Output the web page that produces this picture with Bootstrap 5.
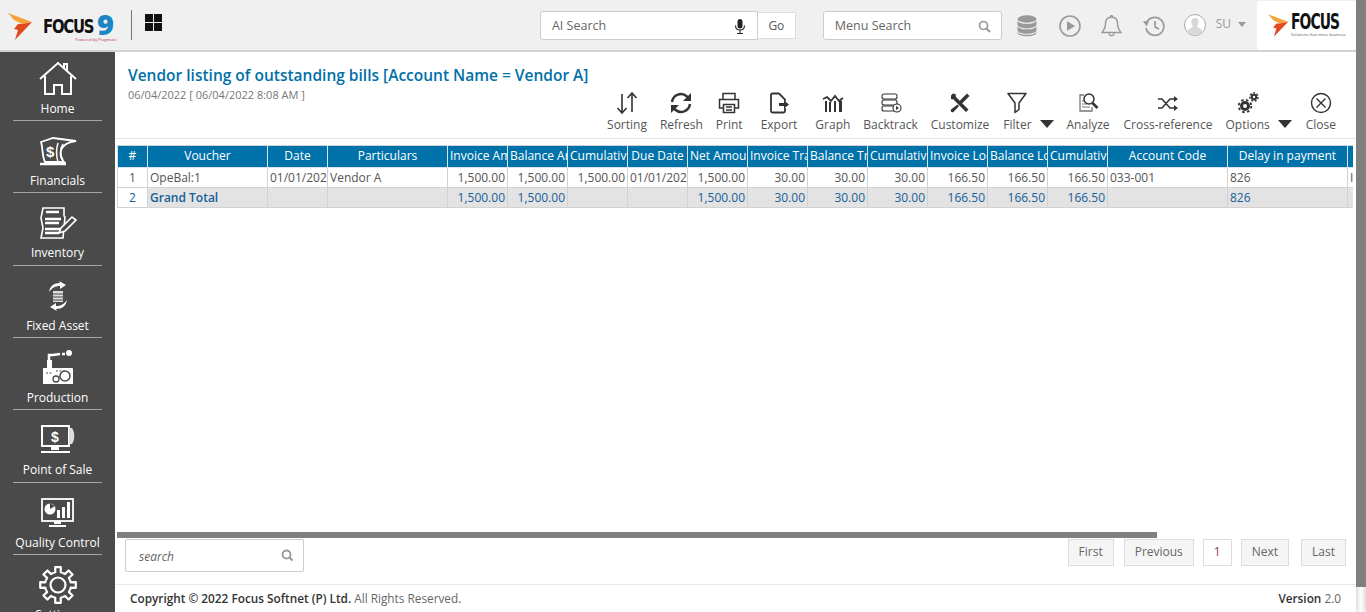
<!DOCTYPE html>
<html lang="en">
<head>
<meta charset="UTF-8">
<title>Vendor listing of outstanding bills</title>
<link href="https://cdn.jsdelivr.net/npm/bootstrap@5.3.0/dist/css/bootstrap.min.css" rel="stylesheet">
<style>
html, body { height: 612px; overflow: hidden; }
body { font-family: "Open Sans", "Liberation Sans", sans-serif; font-size: 12px; color: #555; background: #fff; }
svg { display: block; }

.app-shell { width: 1356px; height: 612px; }
.fake-scroll { width: 10px; height: 612px; background: #f1f1f1; }
.fake-thumb { height: 587px; background: #7f7f7f; }
.fake-rest { height: 25px; background: linear-gradient(90deg, #ddd, #fff 50%, #ddd); border-radius: 0 0 5px 5px; }

/* top bar */
.topbar { height: 52px; flex: none; background: #f0f0f0; border-bottom: 2px solid #d2d2d2; padding-top: 2px; }
.brand-flame { margin-left: 8px; margin-top: 1px; }
.brand-name { font-family: "DejaVu Sans", sans-serif; font-weight: 700; font-size: 20px; color: #111; margin-left: 10px; width: 54px; letter-spacing: -1.6px; line-height: 1; transform: scaleX(.74); transform-origin: left; }
.brand-nine { position: relative; width: 18px; height: 30px; font-weight: 800; font-size: 29px; color: #1a86c4; line-height: 26px; }
.brand-tag { position: absolute; right: -2px; top: 26px; font-size: 4px; line-height: 5px; font-weight: 400; color: #c2334d; white-space: nowrap; }
.brand-rule { width: 1px; height: 30px; background: #777; margin: -2px 13px 0 16px; }
.grid-mark { margin-top: -7px; }
.ai-box { width: 218px; height: 29px; margin-left: 378px; margin-top: -1px; background: #fff; border: 1px solid #ccc; border-radius: 3px 0 0 3px; padding: 1px 11px 0; font-size: 12.5px; color: #666; }
.go-btn { width: 38px; height: 27px; margin-top: -1px; padding-top: 1px; background: #fff; border: 1px solid #ddd; border-left: 0; font-size: 12px; color: #555; }
.menu-box { width: 179px; height: 29px; margin-left: 27px; margin-top: -1px; background: #fff; border: 1px solid #ccc; border-radius: 3px; padding: 1px 10px 0 11px; font-size: 12.5px; color: #666; }
.top-db { margin-left: 15px; }
.top-play { margin-left: 22px; }
.top-bell { margin-left: 20px; }
.top-hist { margin-left: 21px; }
.top-user { margin-left: 19px; margin-top: -2px; }
.top-su { font-size: 12px; color: #999; margin-left: 10px; margin-top: -4px; }
.top-caret { width: 0; height: 0; border-left: 4px solid transparent; border-right: 4px solid transparent; border-top: 5px solid #999; margin: -3px 0 0 7px; }
.logo-box { width: 99px; height: 49px; margin-left: 11px; margin-top: -2px; background: #fff; border-radius: 3px; padding-left: 11px; }
.logo-text { width: 60px; margin-left: 2px; }
.logo-word { font-family: "DejaVu Sans", sans-serif; font-weight: 700; font-size: 21px; line-height: 19px; color: #111; letter-spacing: -1.4px; transform: scaleX(.66); transform-origin: left; white-space: nowrap; }
.logo-tag { font-size: 4px; line-height: 5px; color: #555; white-space: nowrap; }

/* side menu */
.side-menu { width: 115px; flex: none; background: #4a4a4a; overflow: hidden; }
.side-item { height: 72.33px; flex: none; color: #fff; position: relative; padding-top: 11px; }
.side-item:first-child { height: 69px; padding-top: 8px; }
.side-item::after { content: ""; position: absolute; left: 13px; right: 13px; bottom: 0; height: 1px; background: #a5a5a5; }
.side-item:last-child::after { display: none; }
.side-icon { height: 38px; }
.side-label { font-size: 12px; line-height: 16px; margin-top: 3px; white-space: nowrap; }

/* report head */
.report-pane { width: 1241px; min-width: 0; }
.report-head { height: 87px; flex: none; border-bottom: 1px solid #e4e4e4; padding: 12px 0 0 13px; }
.report-title { font-size: 15.5px; line-height: 22px; font-weight: 600; color: #0070a8; margin: 0; }
.report-date { font-size: 11px; line-height: 15px; margin-top: 1px; color: #777; }
.tool-row { gap: 13px; padding-right: 20px; margin-top: -10px; }
.tool-item { text-align: center; color: #555; line-height: 16px; white-space: nowrap; }
.tool-item svg { margin: 0 auto 3px; }
.mr-1px { margin-right: 1px; }
.mr-5px { margin-right: 5px; }
.tool-caret { width: 0; height: 0; border-left: 7px solid transparent; border-right: 7px solid transparent; border-top: 8px solid #333; margin: 28px 0 0 -5px; }
.tool-caret-b { margin-left: -5px; margin-right: 1px; }

/* grid */
.grid-clip { margin: 6px 3px 0 2px; overflow: hidden; flex: 1 1 auto; min-height: 0; }
.data-grid { table-layout: fixed; width: 1290px; margin: 0; border-collapse: collapse; font-size: 12px; color: #555; }
.col-idx { width: 30px; }
.col-std { width: 60px; }
.col-big { width: 120px; }
.data-grid th, .data-grid td { padding: 0 2px; overflow: hidden; white-space: nowrap; border: 1px solid #d2d2d2; background: #fff; color: #555; vertical-align: middle; }
.data-grid th { height: 22px; background: #0072aa; color: #fff; font-weight: 400; text-align: center; border-color: #d8e4ea; border-top-color: #d2d2d2; padding-bottom: 1px; }
.data-grid td { height: 20px; line-height: 18px; padding-top: 1px; }
.data-grid td.num { text-align: right; }
.data-grid td.idx { text-align: center; }
.data-grid tr.grand-row td { background: #e3e3e3; color: #14609a; }
.data-grid tr.grand-row td.grand-name { font-weight: 600; }
.data-grid tr.grand-row td.idx { background: #fff; }
.h-scroll { height: 6px; width: 1040px; margin-left: 2px; flex: none; background: #808080; }

/* bottom of report */
.pager-row { height: 46px; flex: none; padding: 1px 10px 0 10px; }
.grid-search { width: 179px; height: 33px; background: #fff; border: 1px solid #ccc; border-radius: 2px; padding: 0 9px 0 13px; font-size: 12px; font-style: italic; color: #666; }
.grid-search span { margin-top: 2px; }
.pager-btn { height: 27px; background: #f5f5f5; border: 1px solid #ddd; padding: 0 10px; color: #666; line-height: 24px; }
.pager-now { background: #fff; color: #8a4a3a; margin: 0 -1px; }
.pager-last { margin-left: 2px; }
.pager-set { gap: 10px; }
.foot-bar { height: 28px; flex: none; border-top: 1px solid #e8e8e8; padding: 0 15px; color: #666; font-size: 11.8px; }
.foot-bar b { font-weight: 600; color: #333; }
</style>
</head>
<body>
<div class="d-flex">
<div class="app-shell d-flex flex-column">

  <header class="topbar d-flex align-items-center">
    <svg class="brand-flame" width="25" height="27" viewBox="0 0 25 27"><path d="M0 0 24 9 14 11 6 7z" fill="#f5a33a"/><path d="M24 9 7 27l3-10-4-1 4-5h4z" fill="#e2491f"/></svg>
    <div class="brand-name">FOCUS</div>
    <div class="brand-nine">9<span class="brand-tag">Powered by Pragmatic</span></div>
    <div class="brand-rule"></div>
    <svg class="grid-mark" width="17" height="17" viewBox="0 0 17 17"><path d="M0 0h8v8H0zM9 0h8v8H9zM0 9h8v8H0zM9 9h8v8H9z" fill="#111"/></svg>

    <div class="ai-box d-flex align-items-center justify-content-between">
      <span>AI Search</span>
      <svg width="12" height="15" viewBox="0 0 12 15"><rect x="3.5" y="0" width="5" height="9.5" rx="2.5" fill="#222"/><path d="M1.5 6.5c0 6 9 6 9 0M6 11.5V14M3 14.5h6" fill="none" stroke="#222" stroke-width="1.1"/></svg>
    </div>
    <div class="go-btn d-flex align-items-center justify-content-center">Go</div>
    <div class="menu-box d-flex align-items-center justify-content-between">
      <span>Menu Search</span>
      <svg width="13" height="13" viewBox="0 0 13 13"><circle cx="5.5" cy="5.5" r="4" fill="none" stroke="#999" stroke-width="1.7"/><path d="m8.5 8.5 3.5 3.5" stroke="#999" stroke-width="2"/></svg>
    </div>

    <svg class="top-db" width="20" height="22" viewBox="0 0 20 22"><ellipse cx="10" cy="4" rx="9.5" ry="3.7" fill="#999"/><path d="M.5 5.5v4c0 5 19 5 19 0v-4c-1 4.500-18 4.500-19 0zM.5 11v4c0 5 19 5 19 0v-4c-1 4.500-18 4.500-19 0zM.5 16.500v1c0 5 19 5 19 0v-1c-1 4.500-18 4.500-19 0z" fill="#999"/></svg>
    <svg class="top-play" width="22" height="22" viewBox="0 0 22 22"><circle cx="11" cy="11" r="10" fill="none" stroke="#999" stroke-width="1.6"/><path d="M8 6v10l8-5z" fill="#999"/></svg>
    <svg class="top-bell" width="21" height="22" viewBox="0 0 21 22"><path d="M10.500 2c-4 0-6 3-6 7 0 5-2 6-3.500 8.500h19C18.500 15 16.500 14 16.500 9c0-4-2-7-6-7zM8 18.500c.5 3 4.500 3 5 0M9.500 2c0-2 2-2 2 0" fill="none" stroke="#999" stroke-width="1.4"/></svg>
    <svg class="top-hist" width="22" height="22" viewBox="0 0 22 22"><path d="M3.500 8A9 9 0 1 1 3 13" fill="none" stroke="#999" stroke-width="1.7"/><path d="m0 6 6 .5-2.500 5z" fill="#999"/><path d="M12 6v6l4 2" fill="none" stroke="#999" stroke-width="1.7"/></svg>
    <svg class="top-user" width="22" height="22" viewBox="0 0 22 22"><circle cx="11" cy="11" r="10.500" fill="#fff" stroke="#aaa"/><path d="M11 4c-3 0-4 2.500-3.500 5 .3 2 1 3 1.500 4-2 1-5 2-6 4.500 4 4 12 4 16 0-1-2.500-4-3.500-6-4.500.5-1 1.200-2 1.500-4C15 6.500 14 4 11 4z" fill="#d8d8d8"/></svg>
    <span class="top-su">SU</span>
    <span class="top-caret"></span>

    <div class="logo-box d-flex align-items-center">
      <svg class="flex-shrink-0" width="21" height="25" viewBox="0 0 25 27"><path d="M0 0 24 9 14 11 6 7z" fill="#f5a33a"/><path d="M24 9 7 27l3-10-4-1 4-5h4z" fill="#e2491f"/></svg>
      <div class="logo-text">
        <div class="logo-word">FOCUS</div>
        <div class="logo-tag">Solutions that move business</div>
      </div>
    </div>
  </header>

  <div class="d-flex flex-grow-1 overflow-hidden">
    <aside class="side-menu d-flex flex-column">
      <div class="side-item text-center">
        <div class="side-icon d-flex justify-content-center align-items-center"><svg width="38" height="36" viewBox="0 0 38 36"><path d="M1 18 19 2l18 16M25 7V3h3v7M6 15v18h9V24h8v9h9V15" fill="none" stroke="#fff" stroke-width="2"/></svg></div>
        <div class="side-label">Home</div>
      </div>
      <div class="side-item text-center">
        <div class="side-icon d-flex justify-content-center align-items-center"><svg width="38" height="30" viewBox="0 0 38 30"><path d="M2 6 14 2l23 3c-8 1-13 4-15 9-1 4 0 9 3 12H6C3 20 4 12 2 6z" fill="none" stroke="#fff" stroke-width="1.800"/><path d="M19 7c-2 6-2 12 0 19M24 8c-3 5-3 11 0 16" fill="none" stroke="#fff" stroke-width="1.500"/><path d="M1 28h26" stroke="#fff" stroke-width="2.500"/><text x="7" y="21" font-family="Liberation Sans, sans-serif" font-weight="700" font-size="15" fill="#fff">$</text></svg></div>
        <div class="side-label">Financials</div>
      </div>
      <div class="side-item text-center">
        <div class="side-icon d-flex justify-content-center align-items-center"><svg width="38" height="32" viewBox="0 0 38 32"><path d="M4 1h21v8l1 1-2 21H2l2-10-2-10z" fill="none" stroke="#fff" stroke-width="1.600"/><path d="M7 5h13M6 12h16M6 16h14M6 22h15M6 26h14" stroke="#fff" stroke-width="2.500"/><path d="m20 26 2-5 11-11 4 3-11 11z" fill="#4a4a4a" stroke="#fff" stroke-width="1.600"/></svg></div>
        <div class="side-label">Inventory</div>
      </div>
      <div class="side-item text-center">
        <div class="side-icon d-flex justify-content-center align-items-center"><svg width="24" height="30" viewBox="0 0 24 30"><path d="M3 11C4 5 8 2 14 2l-1-2 7 4-6 4v-3C9 5 6 7 3 11zM21 19c-1 6-5 9-11 9l1 2-7-4 6-4v3c5 0 8-2 11-6z" fill="#fff"/><path d="M7 10h10v11H7z" fill="#ddd"/><path d="M7 13h10M7 16h10M7 19h10" stroke="#4a4a4a"/></svg></div>
        <div class="side-label">Fixed Asset</div>
      </div>
      <div class="side-item text-center">
        <div class="side-icon d-flex justify-content-center align-items-center"><svg width="32" height="36" viewBox="0 0 32 36"><path d="M1 34V18h4V10h5v8h20a1 1 0 0 1 1 1v15z" fill="#fff"/><path d="M7 10V5h4l7-1M20 4h3" fill="none" stroke="#fff" stroke-width="2.500"/><circle cx="27" cy="3" r="3" fill="#fff"/><circle cx="23" cy="26" r="5" fill="none" stroke="#4a4a4a" stroke-width="1.500"/><circle cx="14" cy="29" r="3" fill="none" stroke="#4a4a4a" stroke-width="1.300"/><path d="M4 23h6M14 21h10" stroke="#4a4a4a" stroke-dasharray="2 1.500"/></svg></div>
        <div class="side-label">Production</div>
      </div>
      <div class="side-item text-center">
        <div class="side-icon d-flex justify-content-center align-items-center"><svg width="36" height="30" viewBox="0 0 36 30"><rect x="2" y="1" width="27" height="20" fill="none" stroke="#fff" stroke-width="2"/><path d="M29 3h3c3 4 3 12 0 16h-3z" fill="#ddd"/><path d="M11 21h8v4h-8zM1 26h29v2H1z" fill="#fff"/><text x="11" y="17" font-family="Liberation Sans, sans-serif" font-weight="700" font-size="14" fill="#fff">$</text></svg></div>
        <div class="side-label">Point of Sale</div>
      </div>
      <div class="side-item text-center">
        <div class="side-icon d-flex justify-content-center align-items-center"><svg width="33" height="30" viewBox="0 0 33 30"><rect x="1" y="1" width="31" height="22" fill="none" stroke="#fff" stroke-width="1.800"/><circle cx="9" cy="11" r="5.500" fill="#fff"/><path d="M9 11V5l5 3z" fill="#4a4a4a"/><path d="M16 12h3v8h-3zM21 9h3v11h-3zM26 4h3v16h-3z" fill="#fff"/><path d="M13 23h7v3h-7zM8 27h17v2H8z" fill="#fff"/></svg></div>
        <div class="side-label">Quality Control</div>
      </div>
      <div class="side-item text-center">
        <div class="side-icon d-flex justify-content-center align-items-center"><svg width="38" height="38" viewBox="-19 -19 38 38"><circle r="7.500" fill="none" stroke="#fff" stroke-width="2.200"/><g fill="none" stroke="#fff" stroke-width="2.200" stroke-linejoin="round"><path id="gear-tooth" d="M-4.970-12.010-2.700-12.720-2.820-17.780 2.820-17.780 2.700-12.720 4.970-12.010"/><use href="#gear-tooth" transform="rotate(45)"/><use href="#gear-tooth" transform="rotate(90)"/><use href="#gear-tooth" transform="rotate(135)"/><use href="#gear-tooth" transform="rotate(180)"/><use href="#gear-tooth" transform="rotate(225)"/><use href="#gear-tooth" transform="rotate(270)"/><use href="#gear-tooth" transform="rotate(315)"/></g></svg></div>
        <div class="side-label">Settings</div>
      </div>
    </aside>

    <main class="report-pane d-flex flex-column">
      <section class="report-head">
        <h1 class="report-title">Vendor listing of outstanding bills [Account Name = Vendor A]</h1>
        <div class="report-date">06/04/2022 [ 06/04/2022 8:08 AM ]</div>
        <div class="tool-row d-flex justify-content-end align-items-start">
          <div class="tool-item">
            <svg width="22" height="22" viewBox="0 0 22 22"><path d="M6 2v19M1.500 16 6 21l4.500-5M16 20V1M11.500 6 16 1l4.500 5" fill="none" stroke="#333" stroke-width="1.600"/></svg>Sorting</div>
          <div class="tool-item">
            <svg width="22" height="22" viewBox="0 0 22 22"><path d="M2 10a9 9 0 0 1 15-5.500l3 2.500M20 12a9 9 0 0 1-15 5.500L2 15" fill="none" stroke="#333" stroke-width="2.400"/><path d="M21 1v8h-8zM1 21v-8h8z" fill="#333"/></svg>Refresh</div>
          <div class="tool-item mr-5px">
            <svg width="22" height="22" viewBox="0 0 22 22"><path d="M5 7V1.500h12V7M5 16H1.500V7.500h19V16H17M5.500 12.500h11v8h-11zM8 15h6M8 18h6" fill="none" stroke="#333" stroke-width="1.500"/></svg>Print</div>
          <div class="tool-item mr-5px">
            <svg width="22" height="22" viewBox="0 0 22 22"><path d="M11 1.500H4.500a1.500 1.500 0 0 0-1.500 1.500v16a1.500 1.500 0 0 0 1.500 1.500h11a1.500 1.500 0 0 0 1.500-1.500v-3M11 1.500 17 7.500v2" fill="none" stroke="#333" stroke-width="1.800"/><path d="M11 11h5V8.500l5 4-5 4V14h-5z" fill="#333"/></svg>Export</div>
          <div class="tool-item">
            <svg width="22" height="22" viewBox="0 0 22 22"><path d="M3 20V9h2v11zM7 20V10h2v10zM12 20V9h2v11zM17 20V9h3v11z" fill="#333"/><path d="m1 7 4-2 4 4 4-5 4 5 4-3" fill="none" stroke="#333" stroke-width="1.800"/></svg>Graph</div>
          <div class="tool-item">
            <svg width="22" height="22" viewBox="0 0 22 22"><rect x="2" y="2" width="15" height="5" rx="2" fill="none" stroke="#333" stroke-width="1.100"/><rect x="2" y="8" width="15" height="5" rx="2" fill="none" stroke="#333" stroke-width="1.100"/><rect x="2" y="14" width="13" height="5" rx="2" fill="none" stroke="#333" stroke-width="1.100"/><circle cx="17" cy="16" r="4" fill="#fff" stroke="#333" stroke-width="1.100"/><path d="m16 14 3 2-3 2z" fill="#333"/></svg>Backtrack</div>
          <div class="tool-item mr-1px">
            <svg width="22" height="22" viewBox="0 0 22 22"><path d="M2 3.500 4 1.500 6.500 2l.5 3L19.500 17.500 17 20 4.500 7.500 2 7z" fill="#333"/><path d="M18 1.500 20.500 4 11.500 13 9 10.500z" fill="#333"/><path d="M8.500 12.500 10 14l-5.500 6a1.800 1.800 0 0 1-2.500-2.500z" fill="#333"/></svg>Customize</div>
          <div class="tool-item">
            <svg width="22" height="22" viewBox="0 0 22 22"><path d="M2 1.500h18l-7 9.500v6.500l-4 3V11z" fill="none" stroke="#333" stroke-width="1.500" stroke-linejoin="round"/></svg>Filter</div>
          <div class="tool-caret"></div>
          <div class="tool-item mr-1px">
            <svg width="22" height="22" viewBox="0 0 22 22"><path d="M7 3H3v16h12v-4" fill="none" stroke="#777" stroke-width="1.300"/><path d="M5 9h4M5 12h5M5 15h8" stroke="#777"/><circle cx="12" cy="7" r="5" fill="#fff" stroke="#333" stroke-width="1.500"/><path d="m15.500 11 5 5" stroke="#333" stroke-width="2.500"/></svg>Analyze</div>
          <div class="tool-item">
            <svg width="22" height="22" viewBox="0 0 22 22"><path d="M1 7h4l8 9h5M1 16h4l8-9h5" fill="none" stroke="#333" stroke-width="1.500"/><path d="m17 4 4 3-4 3zM17 13l4 3-4 3z" fill="#333"/></svg>Cross-reference</div>
          <div class="tool-item">
            <svg width="22" height="22" viewBox="0 0 22 22"><circle cx="8" cy="14" r="3.500" fill="none" stroke="#333" stroke-width="3"/><circle cx="8" cy="14" r="6.300" fill="none" stroke="#333" stroke-width="1.800" stroke-dasharray="2.500 2.500"/><circle cx="17" cy="5" r="2.200" fill="none" stroke="#333" stroke-width="2"/><circle cx="17" cy="5" r="4" fill="none" stroke="#333" stroke-width="1.500" stroke-dasharray="2 1.500"/></svg>Options</div>
          <div class="tool-caret tool-caret-b"></div>
          <div class="tool-item">
            <svg width="22" height="22" viewBox="0 0 22 22"><circle cx="11" cy="11" r="9.500" fill="none" stroke="#333" stroke-width="1.400"/><path d="m6.500 6.500 9 9M15.500 6.500l-9 9" stroke="#333" stroke-width="1.400"/></svg>Close</div>
        </div>
      </section>

      <div class="grid-clip">
        <table class="table data-grid">
          <colgroup>
            <col class="col-idx"><col class="col-big"><col class="col-std"><col class="col-big">
            <col class="col-std"><col class="col-std"><col class="col-std"><col class="col-std">
            <col class="col-std"><col class="col-std"><col class="col-std"><col class="col-std">
            <col class="col-std"><col class="col-std"><col class="col-std"><col class="col-big">
            <col class="col-big"><col class="col-std">
          </colgroup>
          <thead>
            <tr>
              <th>#</th><th>Voucher</th><th>Date</th><th>Particulars</th><th>Invoice Amount</th><th>Balance Amount</th><th>Cumulative Amount</th><th>Due Date</th><th>Net Amount</th><th>Invoice Transaction</th><th>Balance Transaction</th><th>Cumulative Transaction</th><th>Invoice Local</th><th>Balance Local</th><th>Cumulative Local</th><th>Account Code</th><th>Delay in payment</th><th>Remarks</th>
            </tr>
          </thead>
          <tbody>
            <tr>
              <td class="idx">1</td><td>OpeBal:1</td><td>01/01/2022</td><td>Vendor A</td><td class="num">1,500.00</td><td class="num">1,500.00</td><td class="num">1,500.00</td><td>01/01/2022</td><td class="num">1,500.00</td><td class="num">30.00</td><td class="num">30.00</td><td class="num">30.00</td><td class="num">166.50</td><td class="num">166.50</td><td class="num">166.50</td><td>033-001</td><td>826</td><td>INR</td>
            </tr>
            <tr class="grand-row">
              <td class="idx">2</td><td class="grand-name">Grand Total</td><td></td><td></td><td class="num">1,500.00</td><td class="num">1,500.00</td><td></td><td></td><td class="num">1,500.00</td><td class="num">30.00</td><td class="num">30.00</td><td class="num">30.00</td><td class="num">166.50</td><td class="num">166.50</td><td class="num">166.50</td><td></td><td>826</td><td></td>
            </tr>
          </tbody>
        </table>
      </div>
      <div class="h-scroll"></div>

      <div class="pager-row d-flex justify-content-between align-items-start">
        <div class="grid-search d-flex align-items-center justify-content-between">
          <span>search</span>
          <svg width="13" height="13" viewBox="0 0 13 13"><circle cx="5.500" cy="5.500" r="4" fill="none" stroke="#999" stroke-width="1.800"/><path d="m8.500 8.500 3 3" stroke="#999" stroke-width="2.200"/></svg>
        </div>
        <div class="pager-set d-flex">
          <div class="pager-btn">First</div>
          <div class="pager-btn">Previous</div>
          <div class="pager-btn pager-now">1</div>
          <div class="pager-btn">Next</div>
          <div class="pager-btn pager-last">Last</div>
        </div>
      </div>

      <footer class="foot-bar d-flex justify-content-between align-items-center">
        <span><b>Copyright © 2022 Focus Softnet (P) Ltd.</b> All Rights Reserved.</span>
        <span><b>Version</b> 2.0</span>
      </footer>
    </main>
  </div>
</div>
<div class="fake-scroll">
  <div class="fake-thumb"></div>
  <div class="fake-rest"></div>
</div>
</div>
<script src="https://cdn.jsdelivr.net/npm/bootstrap@5.3.0/dist/js/bootstrap.bundle.min.js"></script>
</body>
</html>
